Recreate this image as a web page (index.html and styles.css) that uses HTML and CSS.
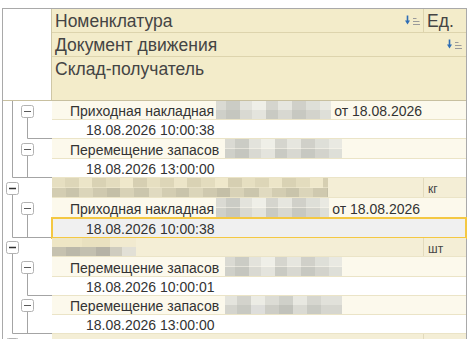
FILE: index.html
```html
<!DOCTYPE html>
<html lang="ru">
<head>
<meta charset="utf-8">
<title>Движения</title>
<link rel="stylesheet" href="styles.css">
</head>
<body>
<div class="table">
  <div class="head">
    <div class="head-tree"></div>
    <div class="head-cols">
      <div class="hrow hr1">
        <div class="hcell hmain hm1"><span>Номенклатура</span>
          <svg class="sort" width="16" height="11" viewBox="0 0 16 11"><path d="M2.5 0.5V6" stroke="#2e6db4" stroke-width="1.6"/><path d="M0 5.5H5L2.5 9.5Z" fill="#2e6db4"/><path d="M8 3.5H11.5M8 6.5H14.5M8 9.5H15" stroke="#9a9a9a" stroke-width="1"/></svg>
        </div>
        <div class="hcell hunit">Ед.</div>
      </div>
      <div class="hrow hr2">
        <div class="hcell hmain hm2"><span>Документ движения</span>
          <svg class="sort" width="16" height="11" viewBox="0 0 16 11"><path d="M2.5 0.5V6" stroke="#2e6db4" stroke-width="1.6"/><path d="M0 5.5H5L2.5 9.5Z" fill="#2e6db4"/><path d="M8 3.5H11.5M8 6.5H14.5M8 9.5H15" stroke="#9a9a9a" stroke-width="1"/></svg>
        </div>
      </div>
      <div class="hrow hr3">
        <div class="hcell hmain"><span>Склад-получатель</span></div>
      </div>
    </div>
  </div>
  <div class="body">
    <svg class="tree" width="49" height="253" viewBox="0 0 49 253">
      <g fill="none" stroke="#a4a4a4" stroke-width="1">
        <path d="M9.5 0V76.5H49"/>
        <path d="M24.5 16.5V37.5H49"/>
        <path d="M24.5 54.5V76.5"/>
        <path d="M9.5 93.5V136.5H49"/>
        <path d="M24.5 113.5V136.5"/>
        <path d="M9.5 152.5V232.5H49"/>
        <path d="M24.5 172.5V194.5H49"/>
        <path d="M24.5 210.5V232.5"/>
      </g>
      <g fill="#fff" stroke="#b2b2b2" stroke-width="1">
        <rect x="18.5" y="4.5" width="12" height="12" rx="2"/>
        <rect x="18.5" y="42.5" width="12" height="12" rx="2"/>
        <rect x="3.5" y="81.5" width="12" height="12" rx="2"/>
        <rect x="18.5" y="101.5" width="12" height="12" rx="2"/>
        <rect x="3.5" y="140.5" width="12" height="12" rx="2"/>
        <rect x="18.5" y="160.5" width="12" height="12" rx="2"/>
        <rect x="18.5" y="198.5" width="12" height="12" rx="2"/>
        <rect x="3.5" y="237.5" width="12" height="12" rx="2"/>
      </g>
      <g stroke="#5a5a5a" stroke-width="1">
        <path d="M21 10.5H28M21 48.5H28M21 107.5H28M21 166.5H28M21 204.5H28"/>
      </g>
      <g stroke="#303030" stroke-width="1.4">
        <path d="M6 87.5H13M6 146.5H13M6 243.5H13"/>
      </g>
    </svg>

    <div class="row doc"><span class="txt">Приходная накладная</span><span class="mz mz-doc w-a"></span><span class="txt gap">от 18.08.2026</span></div>
    <div class="row date"><span class="txt">18.08.2026 10:00:38</span></div>
    <div class="row doc"><span class="txt">Перемещение запасов</span><span class="mz mz-doc w-b"></span></div>
    <div class="row date"><span class="txt">18.08.2026 13:00:00</span></div>
    <div class="row grp"><div class="gmain"><span class="mz mz-grp w-c"></span></div><div class="gunit">кг</div></div>
    <div class="row doc"><span class="txt">Приходная накладная</span><span class="mz mz-doc w-d"></span><span class="txt gap">от 18.08.2026</span></div>
    <div class="row date sel"><span class="txt">18.08.2026 10:00:38</span></div>
    <div class="row grp"><div class="gmain"><span class="mz mz-grp2 w-e"></span></div><div class="gunit">шт</div></div>
    <div class="row doc"><span class="txt">Перемещение запасов</span><span class="mz mz-doc w-b"></span></div>
    <div class="row date"><span class="txt">18.08.2026 10:00:01</span></div>
    <div class="row doc"><span class="txt">Перемещение запасов</span><span class="mz mz-doc2 w-b"></span></div>
    <div class="row date"><span class="txt">18.08.2026 13:00:00</span></div>
    <div class="row grp"><div class="gmain"></div><div class="gunit"></div></div>
  </div>
</div>
</body>
</html>
```

FILE: styles.css
```css
html, body {
  margin: 0;
  padding: 0;
  height: 339px;
  overflow: hidden;
  background: #ffffff;
}

body {
  font-family: "Liberation Sans", Arial, sans-serif;
  color: #333333;
}

.table {
  margin: 8px 0 0 2px;
  width: 465px;
  box-sizing: border-box;
  border: 1px solid #a9a9a9;
  border-bottom: none;
}

/* ---------- header ---------- */
.head {
  display: flex;
  height: 92px;
  box-sizing: border-box;
  border-bottom: 1px solid #c8c0a0;
}

.head-tree {
  width: 49px;
  flex: none;
  box-sizing: border-box;
  border-right: 1px solid #cfc7a6;
  background: #ffffff;
}

.head-cols {
  flex: 1;
  display: flex;
  flex-direction: column;
  background: #f3ecca;
}

.hrow {
  display: flex;
  box-sizing: border-box;
  border-bottom: 1px solid #ddd4ad;
}

.hr1, .hr2 {
  height: 24px;
}

.hr3 {
  flex: 1;
  border-bottom: none;
}

.hcell {
  display: flex;
  align-items: center;
  box-sizing: border-box;
  padding-left: 3px;
  font-size: 17.5px;
  line-height: 22px;
  color: #444444;
  white-space: nowrap;
}

.hmain {
  flex: 1;
  justify-content: space-between;
}

.hm1 {
  padding-right: 2px;
}

.hm2 {
  padding-right: 3px;
}

.hr3 .hcell {
  align-items: flex-start;
  padding-top: 1px;
}

.hunit {
  width: 43px;
  flex: none;
  border-left: 1px solid #ddd4ad;
  padding-left: 3px;
}

.sort {
  display: block;
  flex: none;
}

/* ---------- body ---------- */
.body {
  display: grid;
  grid-template-columns: 49px 1fr;
  grid-template-rows: 19px 19px 20px 19px 20px 20px 20px 19px 20px 19px 19px 19px 20px;
}

.tree {
  grid-column: 1;
  grid-row: 1 / 14;
  display: block;
}

.row {
  grid-column: 2;
  display: flex;
  align-items: center;
  box-sizing: border-box;
  border-bottom: 1px solid #ebe4c7;
  padding-top: 2px;
  font-size: 14px;
  line-height: 16px;
  white-space: nowrap;
  overflow: hidden;
}

.doc {
  background: #fcf9ec;
  padding-left: 18px;
}

.date {
  background: #ffffff;
  padding-left: 34px;
}

.grp {
  background: #f4eed6;
  padding-top: 0;
  align-items: stretch;
}

.sel {
  background: #f0f0f0;
  outline: 2px solid #f4c843;
  outline-offset: -1px;
}

.gmain {
  flex: 1;
  display: flex;
  align-items: stretch;
}

.gunit {
  width: 43px;
  flex: none;
  box-sizing: border-box;
  border-left: 1px solid #e2dabc;
  padding: 4px 0 0 4px;
  font-size: 12px;
  line-height: 14px;
  color: #444444;
}

.gap {
  margin-left: 3px;
}

/* ---------- pixelated (hidden) fragments ---------- */
.mz {
  display: block;
  flex: none;
  align-self: stretch;
  margin-top: -2px;
  background-repeat: no-repeat;
  background-size: 100% 50%;
  background-position: 0 0, 0 100%;
  filter: blur(0.6px);
}

.grp .mz {
  margin-top: 0;
}

.mz-doc {
  margin-left: 2px;
  background-image:
    linear-gradient(90deg, #dadad3 0 10px, #cbccc5 10px 24px, #e3e3dc 24px 36px, #efefe8 36px 50px, #d5d5ce 50px 62px, #e6e6df 62px 76px, #d0d0c9 76px 90px, #dedfd8 90px 104px, #e9e9e2 104px),
    linear-gradient(90deg, #cfd0c9 0 10px, #c5c6bf 10px 24px, #d9d9d2 24px 36px, #e4e4dd 36px 50px, #c9cac3 50px 62px, #d8d8d1 62px 76px, #c7c8c1 76px 90px, #d3d3cc 90px 104px, #dedfd8 104px);
}

.mz-doc2 {
  margin-left: 2px;
  background-image:
    linear-gradient(90deg, #e4e4dd 0 12px, #d3d3cc 12px 26px, #ececE5 26px 40px, #dcdcd5 40px 54px, #cfd0c9 54px 68px, #e8e8e1 68px 82px, #d6d6cf 82px 96px, #e1e1da 96px),
    linear-gradient(90deg, #d4d4cd 0 12px, #c8c9c2 12px 26px, #dededb 26px 40px, #cdcdc6 40px 54px, #c1c2bb 54px 68px, #dadad3 68px 82px, #c9cac3 82px 96px, #d6d6cf 96px);
}

.mz-grp {
  background-image:
    repeating-linear-gradient(90deg, #e6dfc1 0 13px, #ddd6b8 13px 27px, #ece5c8 27px 40px, #d9d2b4 40px 54px, #e3dcbe 54px 68px, #efe8cb 68px 81px, #d6cfb2 81px 95px),
    repeating-linear-gradient(90deg, #d3cdb2 0 14px, #c9c4ab 14px 27px, #dbd5ba 27px 41px, #cfc9af 41px 55px, #c4bfa7 55px 68px, #d8d2b7 68px 82px, #cbc6ad 82px 97px, #e0dac0 97px 110px);
}

.mz-grp2 {
  background-image:
    linear-gradient(90deg, #eee6c5 0 30px, #e9e1c0 30px 58px, #f1ead0 58px),
    linear-gradient(90deg, #c6c2b0 0 14px, #bbb8a9 14px 28px, #c3c0b0 28px 44px, #b6b3a6 44px 58px, #cfccbf 58px 70px, #e2e0d6 70px);
}

.w-a { width: 115px; }
.w-b { width: 117px; margin-left: 6px; }
.w-c { width: 276px; }
.w-d { width: 113px; }
.w-e { width: 84px; }
```
